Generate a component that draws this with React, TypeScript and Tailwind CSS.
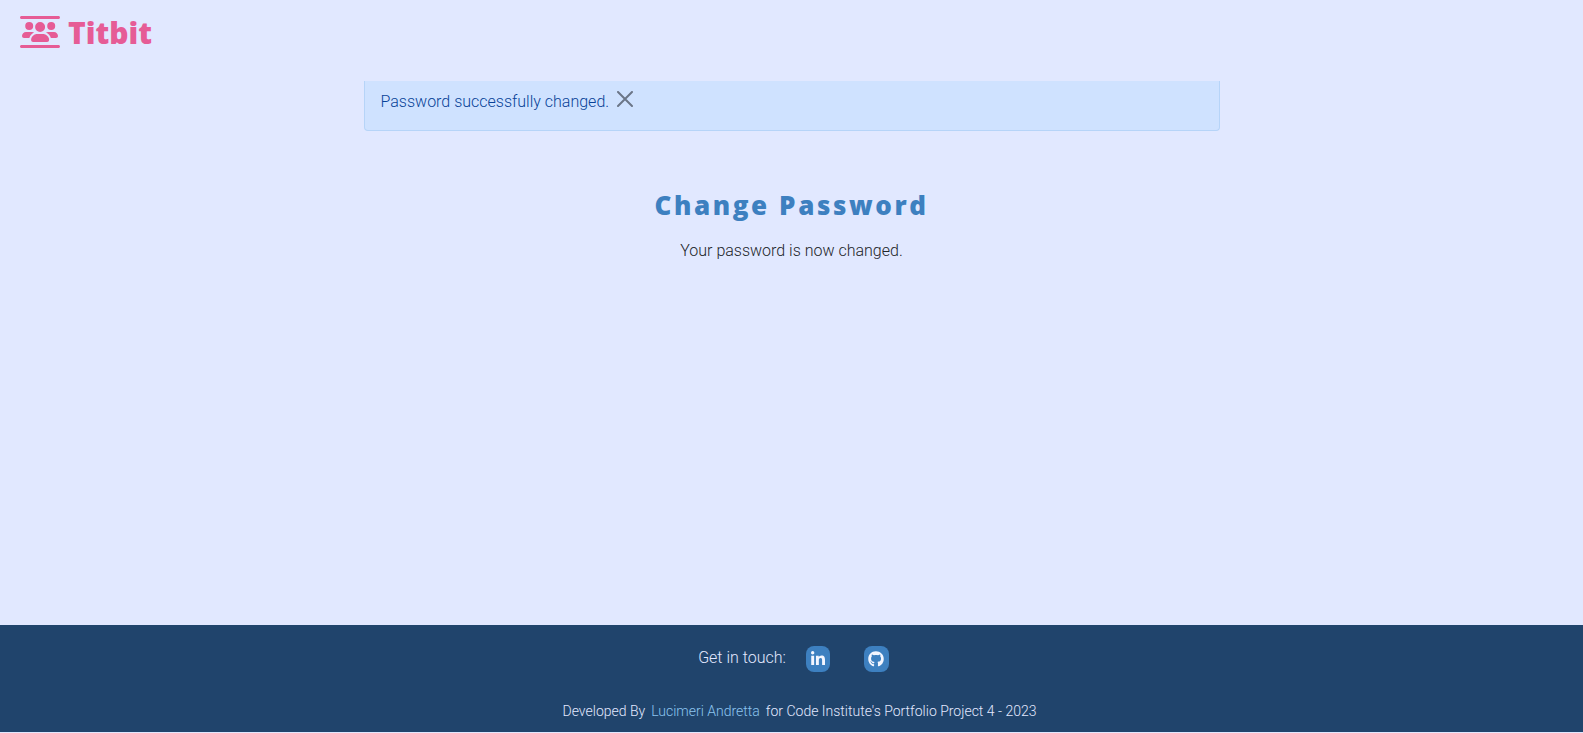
import { useState } from "react";
import { FaGithub, FaLinkedinIn, FaUsersBetweenLines } from "react-icons/fa6";

function Header() {
  return (
    <header className="flex h-[81px] items-start px-5 pt-3">
      <a
        href="#"
        className="flex h-10 items-center gap-2 font-['Open_Sans',sans-serif] text-3xl font-extrabold text-[#e65c96]"
      >
        <FaUsersBetweenLines className="h-8 w-10" aria-hidden="true" />
        <span className="pt-0.5">Titbit</span>
      </a>
    </header>
  );
}

function Alert({ onClose }: { onClose: () => void }) {
  return (
    <div
      role="alert"
      className="flex h-[50px] items-start gap-2 rounded-b border border-t-0 border-[#b6d4f8] bg-[#cfe2ff] px-4 pt-2 font-light text-[#084298]"
    >
      <span className="pt-px">Password successfully changed.</span>
      <button type="button" aria-label="Close" onClick={onClose} className="pt-0.5 text-[#6b7688]">
        <svg viewBox="0 0 16 16" className="size-4" stroke="currentColor" strokeWidth="2" strokeLinecap="round">
          <path d="M1 1L15 15M15 1L1 15" />
        </svg>
      </button>
    </div>
  );
}

function Footer() {
  return (
    <footer className="mb-px flex flex-col items-center bg-[#20446c] pt-5 pb-2.5 text-[#e2e8ff]">
      <div className="ml-1 flex h-7 items-center">
        <p className="pb-0.5 font-light">Get in touch:</p>
        <a
          href="#"
          aria-label="LinkedIn"
          className="ml-5 flex h-[26px] w-6 items-center justify-center rounded-lg bg-[#3d80c0] text-[#f3f6ff]"
        >
          <FaLinkedinIn className="size-4" />
        </a>
        <a
          href="#"
          aria-label="GitHub"
          className="ml-[34px] flex h-[26px] w-[25px] items-center justify-center rounded-lg bg-[#3d80c0] text-[#f3f6ff]"
        >
          <FaGithub className="size-4" />
        </a>
      </div>
      <p className="mt-7 ml-4 text-sm leading-[21px] font-light">
        Developed By
        <a href="#" className="mx-1.5 text-[#8cc4ef]">
          Lucimeri Andretta
        </a>
        for Code Institute's Portfolio Project 4 - 2023
      </p>
    </footer>
  );
}

export default function App() {
  const [open, setOpen] = useState(true);
  return (
    <div className="flex min-h-screen flex-col bg-[#e1e8ff] font-[Roboto,sans-serif] text-base text-[#212529]">
      <Header />
      <main className="mx-auto w-full max-w-[856px] grow">
        <div className="h-[50px]">{open && <Alert onClose={() => setOpen(false)} />}</div>
        <section className="pt-14 text-center">
          <h1 className="font-['Open_Sans',sans-serif] text-[26px] leading-9 font-extrabold tracking-widest text-[#3d80c0]">
            Change Password
          </h1>
          <p className="mt-4 font-light">Your password is now changed.</p>
        </section>
      </main>
      <Footer />
    </div>
  );
}
